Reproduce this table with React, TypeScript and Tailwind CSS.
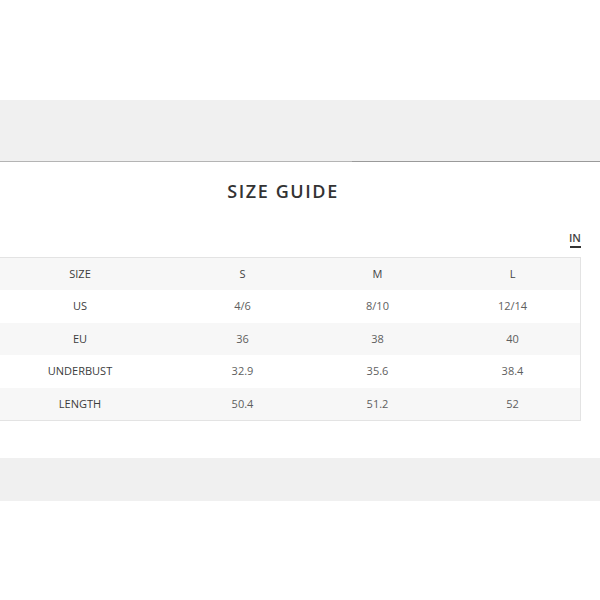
const rows = [
  { label: "SIZE", s: "S", m: "M", l: "L", head: true },
  { label: "US", s: "4/6", m: "8/10", l: "12/14" },
  { label: "EU", s: "36", m: "38", l: "40" },
  { label: "UNDERBUST", s: "32.9", m: "35.6", l: "38.4" },
  { label: "LENGTH", s: "50.4", m: "51.2", l: "52" },
];

export default function App() {
  return (
    <div className="w-[600px] h-[600px] bg-white overflow-hidden font-['Open_Sans',sans-serif]">
      <div className="h-[100px]" />
      <div className="h-[61px] bg-[#f0f0f0]" />
      <div className="flex h-px">
        <div className="w-[352px] bg-[#b4b4b4]" />
        <div className="flex-1 bg-[#9a9a9a]" />
      </div>

      <div className="pt-[19px] flex justify-center pr-[34px]">
        <h1 className="text-[18px] leading-[20px] font-semibold tracking-[1.6px] text-[#333]">SIZE GUIDE</h1>
      </div>

      <div className="flex justify-end pr-[19px] pt-[31px]">
        <div className="flex flex-col items-center">
          <span className="text-[11px] leading-[12px] font-semibold text-[#444]">IN</span>
          <div className="mt-[2px] w-[11px] h-[2px] bg-[#333]" />
        </div>
      </div>

      <div className="mt-[9px] w-[581px] border-t border-r border-b border-[#e3e3e3] text-[11px]">
        {rows.map((r, i) => (
          <div
            key={r.label}
            className={`flex items-center h-[32.4px] ${i % 2 === 0 ? "bg-[#f7f7f7]" : "bg-white"} ${r.head ? "text-[#444]" : "text-[#5e5e5e]"}`}
          >
            <div className="w-[175px] pr-[15px] text-center text-[#3c3c3c]">{r.label}</div>
            <div className="w-[135px] text-center">{r.s}</div>
            <div className="w-[135px] text-center">{r.m}</div>
            <div className="w-[135px] text-center">{r.l}</div>
          </div>
        ))}
      </div>

      <div className="mt-[37px] h-[43px] bg-[#f0f0f0]" />
    </div>
  );
}
